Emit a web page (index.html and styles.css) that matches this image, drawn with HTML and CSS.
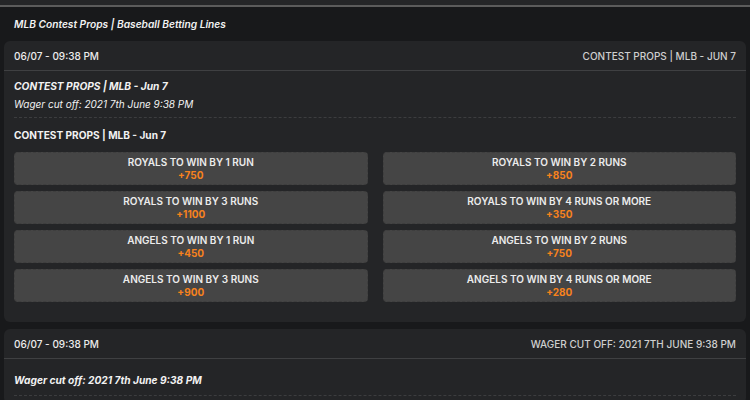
FILE: index.html
```html
<!DOCTYPE html>
<html lang="en">
<head>
    <meta charset="UTF-8">
    <meta name="viewport" content="width=device-width, initial-scale=1.0">
    <title>MLB Contest Props | Baseball Betting Lines</title>
    <link rel="stylesheet" href="styles.css">
</head>
<body>
    <div class="topbar"></div>
    <h1 class="page-title">MLB Contest Props | Baseball Betting Lines</h1>

    <div class="card">
        <div class="card-head">
            <span class="head-date">06/07 - 09:38 PM</span>
            <span class="head-info">CONTEST PROPS | MLB - JUN 7</span>
        </div>
        <div class="card-body">
            <div class="intro">
                <div class="event-name">CONTEST PROPS | MLB - Jun 7</div>
                <div class="cutoff">Wager cut off: 2021 7th June 9:38 PM</div>
            </div>
            <div class="market-name">CONTEST PROPS | MLB - Jun 7</div>
            <div class="odds-grid">
                <button class="odd"><span class="odd-label">ROYALS TO WIN BY 1 RUN</span><span class="odd-price">+750</span></button>
                <button class="odd"><span class="odd-label">ROYALS TO WIN BY 2 RUNS</span><span class="odd-price">+850</span></button>
                <button class="odd"><span class="odd-label">ROYALS TO WIN BY 3 RUNS</span><span class="odd-price">+1100</span></button>
                <button class="odd"><span class="odd-label">ROYALS TO WIN BY 4 RUNS OR MORE</span><span class="odd-price">+350</span></button>
                <button class="odd"><span class="odd-label">ANGELS TO WIN BY 1 RUN</span><span class="odd-price">+450</span></button>
                <button class="odd"><span class="odd-label">ANGELS TO WIN BY 2 RUNS</span><span class="odd-price">+750</span></button>
                <button class="odd"><span class="odd-label">ANGELS TO WIN BY 3 RUNS</span><span class="odd-price">+900</span></button>
                <button class="odd"><span class="odd-label">ANGELS TO WIN BY 4 RUNS OR MORE</span><span class="odd-price">+280</span></button>
            </div>
        </div>
    </div>

    <div class="card">
        <div class="card-head">
            <span class="head-date">06/07 - 09:38 PM</span>
            <span class="head-info">WAGER CUT OFF: 2021 7TH JUNE 9:38 PM</span>
        </div>
        <div class="card-body second">
            <div class="intro">
                <div class="event-name">Wager cut off: 2021 7th June 9:38 PM</div>
            </div>
        </div>
    </div>
</body>
</html>
```

FILE: styles.css
```css
body {
    font-family: Inter, "Open Sans", "Liberation Sans", sans-serif;
    background-color: #18191b;
    color: #f2f2f2;
    margin: 0;
    padding: 0;
}
.topbar {
    height: 5px;
    background: #252628;
    border-bottom: 2px solid #5c5c5c;
}
.page-title {
    margin: 0;
    padding: 0 14px;
    line-height: 34px;
    font-size: 10.2px;
    font-style: italic;
    font-weight: 600;
}
.card {
    margin: 0 4px 7px;
    background: #242527;
    border-radius: 6px;
}
.card-head {
    display: flex;
    justify-content: space-between;
    align-items: center;
    height: 29px;
    padding: 0 10px;
    border-bottom: 1px solid #3f4042;
    font-size: 10px;
}
.head-date {
    color: #ececec;
    font-weight: 500;
}
.head-info {
    color: #cfcfcf;
    font-weight: 500;
}
.card-body {
    padding: 6px 10px 20px;
}
.card-body.second {
    padding-top: 12px;
    padding-bottom: 8px;
}
.intro {
    padding-bottom: 4px;
    border-bottom: 1px dashed #3c3d3f;
}
.second .intro {
    padding-bottom: 6px;
}
.event-name {
    line-height: 18px;
    font-size: 10.2px;
    font-style: italic;
    font-weight: 700;
}
.cutoff {
    line-height: 18px;
    font-size: 10px;
    font-style: italic;
}
.market-name {
    margin: 8px 0;
    line-height: 18px;
    font-size: 10.1px;
    font-weight: 700;
}
.odds-grid {
    display: grid;
    grid-template-columns: 1fr 1fr;
    gap: 6px 15px;
}
.odd {
    display: flex;
    flex-direction: column;
    align-items: center;
    justify-content: center;
    height: 33px;
    padding: 0;
    background: #454545;
    border: 1px dashed #3e3e3e;
    border-radius: 4px;
    font-family: inherit;
    cursor: pointer;
}
.odd:hover {
    background: #4d4d4d;
}
.odd-label {
    line-height: 13px;
    font-size: 10px;
    font-weight: 600;
    color: #ececec;
}
.odd-price {
    line-height: 13px;
    font-size: 10px;
    font-weight: 700;
    color: #f7821d;
}
```
